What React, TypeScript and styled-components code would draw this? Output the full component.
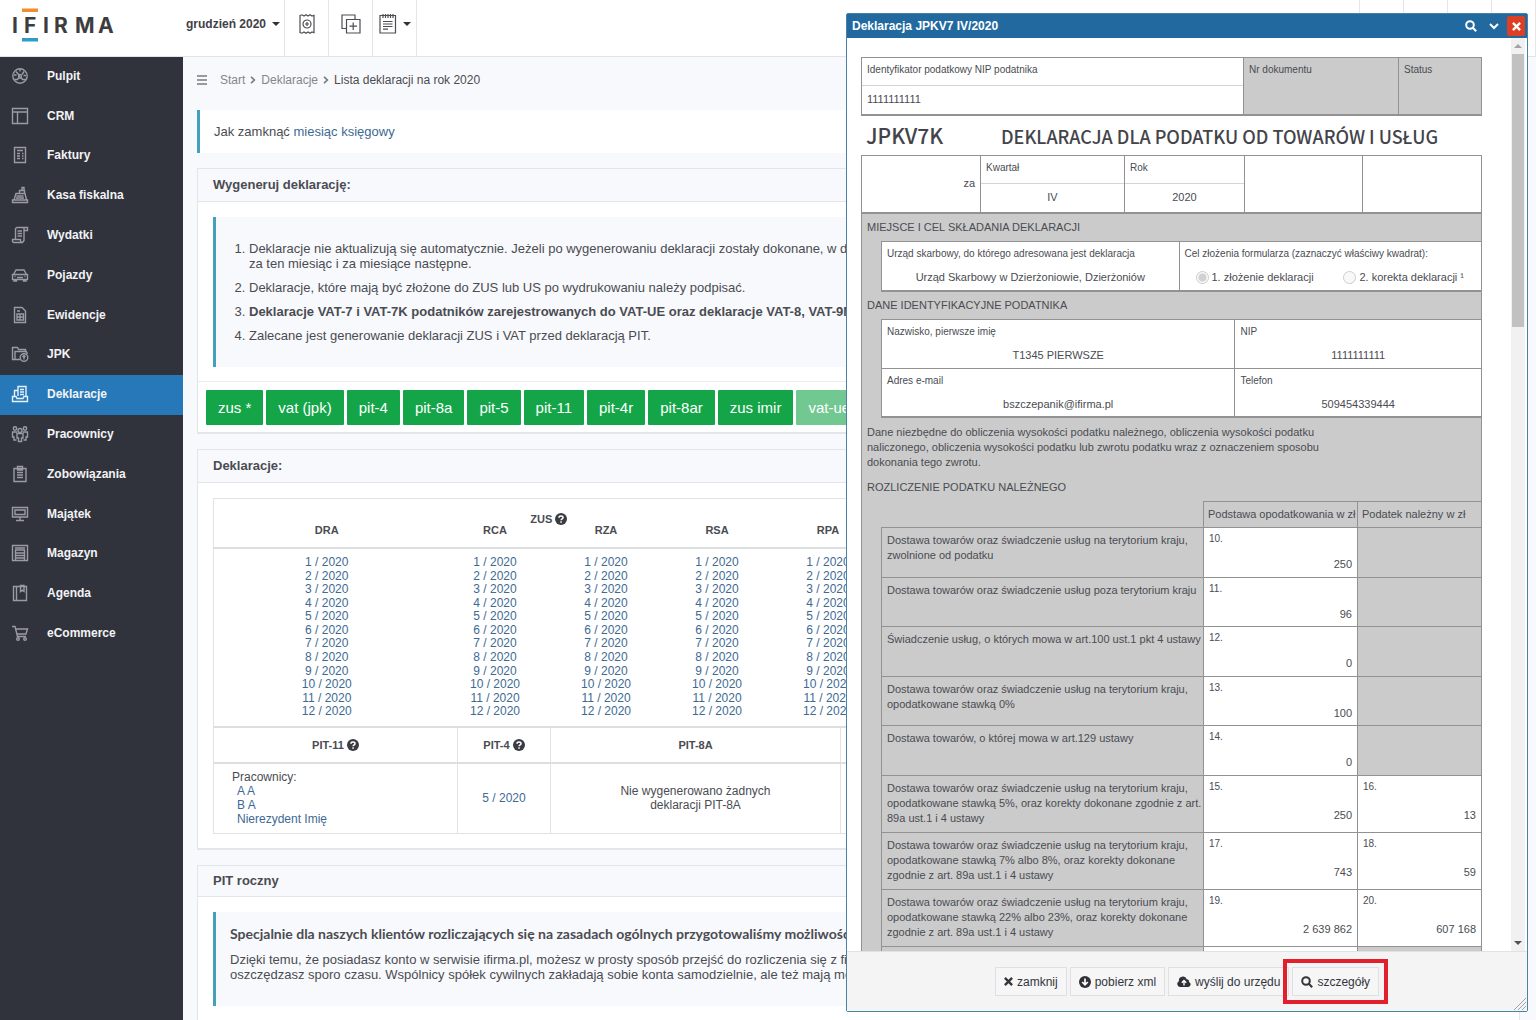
import React from 'react';
import styled, { createGlobalStyle, css } from 'styled-components';

const sans = `"Liberation Sans", Arial, sans-serif`;
const display = `"Noto Sans CJK JP", "Noto Sans", sans-serif`;

const GlobalStyle = createGlobalStyle`
  *, *::before, *::after { box-sizing: border-box; }
  body { margin: 0; background: #f8f9fc; font-family: ${sans}; font-size: 12px; color: #4a4c52; overflow: hidden; }
  button { font-family: inherit; cursor: pointer; }
  a { color: #3d6a93; text-decoration: none; }
  h1, h2, h3, p { margin: 0; }
`;

const Page = styled.div`
  display: flex;
  flex-direction: column;
  height: 100vh;
  overflow: hidden;
`;

/* ---------- top bar ---------- */

const TopBar = styled.header`
  display: flex;
  flex: none;
  height: 57px;
  background: #fff;
  border-bottom: 1px solid #e1e3e6;
`;

const LogoLink = styled.a`
  width: 182px;
  padding: 6px 0 0 11px;
`;

const BarButton = styled.button<{ $wide?: boolean }>`
  display: flex;
  align-items: center;
  justify-content: center;
  gap: 6px;
  width: ${(p) => (p.$wide ? 103 : 44)}px;
  padding: 0 0 8px;
  border: 0;
  border-right: 1px solid #e6e6e8;
  background: none;
  color: #3f4147;
  font-size: 12px;
  font-weight: 700;
`;

const Caret = styled.span`
  border: 4px solid transparent;
  border-top-color: #2f3238;
  border-bottom: 0;
`;

const BarSlots = styled.div`
  display: grid;
  grid-template-columns: repeat(4, 44px);
  margin-left: auto;
  border-right: 1px solid #e6e6e8;
`;

const BarSlot = styled.div`
  border-left: 1px solid #e6e6e8;
`;

/* ---------- sidebar ---------- */

const Columns = styled.div`
  display: flex;
  flex: 1;
  min-height: 0;
`;

const Sidebar = styled.nav`
  flex: none;
  width: 183px;
  background: #30323c;
`;

const NavList = styled.ul`
  display: grid;
  grid-auto-rows: 1fr;
  height: 597px;
  margin: 0;
  padding: 0;
  list-style: none;
`;

const NavLink = styled.a<{ $active?: boolean }>`
  display: flex;
  align-items: center;
  gap: 18px;
  height: 100%;
  padding: 0 0 2px 11px;
  font-weight: 700;
  color: #f2f3f5;
  background: ${(p) => (p.$active ? '#2678b8' : 'transparent')};
  svg { color: ${(p) => (p.$active ? '#e6f1fa' : '#9a9ca4')}; }
`;

/* ---------- main column ---------- */

const Main = styled.main`
  flex: 1;
  min-width: 0;
  padding: 13px 16px 0 14px;
`;

const Crumbs = styled.nav`
  display: flex;
  align-items: center;
  height: 20px;
  font-size: 12px;
  gap: 5px;
  a { color: #84868c; }
  svg { flex: none; }
`;

const MenuButton = styled.button`
  display: flex;
  margin-right: 8px;
  padding: 0;
  border: 0;
  background: none;
`;

const Callout = styled.section<{ $tinted?: boolean }>`
  border-left: 3px solid #45a0b9;
  background: ${(p) => (p.$tinted ? '#f8f9fc' : '#fff')};
`;

const Tip = styled(Callout)`
  margin-top: 20px;
  padding: 14px;
  font-size: 13px;
  line-height: 15px;
`;

const Card = styled.section`
  margin-top: 15px;
  border: 1px solid #e2e5e9;
  border-bottom-width: 2px;
  background: #fff;
`;

const CardTitle = styled.h2<{ $compact?: boolean }>`
  height: ${(p) => (p.$compact ? 31 : 33)}px;
  padding: 0 15px;
  border-bottom: 1px solid #e2e5e9;
  background: #f8f9fc;
  font-size: 13px;
  line-height: ${(p) => (p.$compact ? 30 : 32)}px;
  color: #4a4c52;
`;

const CardBody = styled.div`
  padding: 15px 15px 14px;
`;

const Rules = styled.ol`
  margin: 0;
  padding: 24px 0 15px 33px;
  font-size: 13px;
  line-height: 15px;
  white-space: nowrap;
  li { margin-bottom: 9px; }
`;

const CardActions = styled.div`
  display: flex;
  gap: 3px;
  padding: 8px 8px 7px;
  border-top: 1px solid #ececee;
`;

const GreenButton = styled.button`
  height: 35px;
  padding: 0 12px;
  border: 0;
  border-radius: 1px;
  background: #15a549;
  color: #fff;
  font-size: 15px;
  white-space: nowrap;
  &:disabled { opacity: 0.6; }
`;

const DataTable = styled.table`
  width: 100%;
  table-layout: fixed;
  border-collapse: collapse;
  border: 1px solid #e0e3e3;
  font-size: 12px;
  line-height: 14px;
`;

const ZusTable = styled(DataTable)`
  border-bottom: 2px solid #dcdfdf;
  th { padding: 0; font-size: 11px; font-weight: 700; line-height: 11px; }
  tr:first-child th { padding-top: 14px; vertical-align: bottom; }
  tr:nth-child(2) th { padding-bottom: 11px; }
  thead { border-bottom: 2px solid #dcdfdf; }
  tbody td { height: 179px; padding: 7px 0; text-align: center; vertical-align: top; }
`;

const PeriodLink = styled.a`
  display: block;
  font-size: 12px;
  line-height: 13px;
`;

const Periods = styled.div`
  display: grid;
  height: 163px;
  grid-auto-rows: 1fr;
`;

const PitTable = styled(DataTable)`
  border-top: 0;
  th { height: 35px; padding: 0; font-size: 11px; border-right: 1px solid #e0e3e3; border-bottom: 2px solid #dcdfdf; }
  td { height: 70px; padding: 0 60px; text-align: center; border-right: 1px solid #e0e3e3; }
  td:first-child { padding: 0 18px; text-align: left; }
  td:nth-child(2) { padding: 0; }
  td:first-child a { padding-left: 5px; line-height: 14px; }
`;

const HelpMark = styled.svg`
  width: 12px;
  height: 12px;
  margin-left: 3px;
  vertical-align: -2px;
`;

const Promo = styled(Callout)`
  height: 94px;
  padding: 12px 14px;
  overflow: hidden;
  white-space: nowrap;
  font-size: 13px;
  line-height: 15px;
  h3 { margin-bottom: 8px; font: 700 14px/20px Lato, sans-serif; }
`;

/* ---------- declaration window ---------- */

const Window = styled.div`
  position: fixed;
  top: 13px;
  right: 8px;
  bottom: 8px;
  width: 682px;
  display: flex;
  flex-direction: column;
  border: 1px solid #4a82a6;
  border-radius: 2px;
  background: #fff;
`;

const WindowBar = styled.header`
  display: flex;
  flex: none;
  align-items: center;
  gap: 3px;
  height: 24px;
  padding: 0 2px 0 5px;
  background: #22699f;
  color: #fff;
  h1 { flex: 1; font-size: 12px; }
`;

const WindowButton = styled.button<{ $close?: boolean }>`
  display: flex;
  align-items: center;
  justify-content: center;
  width: ${(p) => (p.$close ? 18 : 20)}px;
  height: 20px;
  padding: 0;
  border: 0;
  border-radius: 2px;
  background: ${(p) => (p.$close ? '#dd3f24' : 'none')};
  color: #fff;
`;

const WindowBody = styled.div`
  display: flex;
  flex: 1;
  min-height: 0;
  overflow: hidden;
`;

const Sheet = styled.form`
  flex: 1;
  min-width: 0;
  padding: 19px 29px 0 14px;
  font-size: 11px;
  line-height: 15px;
`;

const ScrollTrack = styled.div`
  display: flex;
  flex: none;
  flex-direction: column;
  align-items: center;
  width: 14px;
  margin-right: 2px;
  padding: 6px 0;
  background: #f1f1f1;
`;

const ScrollArrow = styled.span<{ $down?: boolean }>`
  border: 4px solid transparent;
  ${(p) =>
    p.$down
      ? css`margin-top: auto; border-top-color: #50545a; border-bottom: 0;`
      : css`margin-bottom: 6px; border-bottom-color: #a3a3a3; border-top: 0;`}
`;

const ScrollThumb = styled.span`
  width: 12px;
  height: 273px;
  background: #c1c1c1;
`;

const line = '1px solid #929292';

const FieldRow = styled.div<{ $cols: string; $h?: number; $top?: boolean; $heavy?: boolean }>`
  display: grid;
  grid-template-columns: ${(p) => p.$cols};
  height: ${(p) => p.$h ?? 50}px;
  border-bottom: ${line};
  border-left: ${line};
  ${(p) => p.$top && css`border-top: ${line};`}
  ${(p) => p.$heavy && css`border-bottom-width: 2px;`}
`;

const Field = styled.div<{ $grey?: boolean }>`
  display: flex;
  flex-direction: column;
  border-right: ${line};
  background: ${(p) => (p.$grey ? '#cbcbcb' : '#fff')};
`;

const FieldLabel = styled.span<{ $ruled?: boolean }>`
  padding: 4px 5px 0;
  font-size: 10px;
  line-height: 15px;
  ${(p) => p.$ruled && css`height: 28px; border-bottom: 1px solid #d4d4d4; flex: none;`}
`;

const FieldValue = styled.span<{ $align?: string; $low?: boolean }>`
  margin: auto 0;
  padding: ${(p) => (p.$low ? '4px 5px 0' : '0 5px 2px')};
  text-align: ${(p) => p.$align ?? 'center'};
`;

const SheetTitle = styled.h2`
  display: grid;
  grid-template-columns: 135px 1fr;
  align-items: baseline;
  height: 39px;
  padding: 0 5px;
  font: 500 18px/38px ${display};
  color: #43444a;
  white-space: nowrap;
`;

const FormCode = styled.span`
  font-size: 21px;
`;

const Part = styled.section`
  padding-left: 19px;
  background: #cbcbcb;
  border-left: ${line};
  border-right: ${line};
  ${Field}:last-child { border-right: 0; }
`;

const PartTitle = styled.h3`
  margin-left: -19px;
  padding-left: 5px;
  font-size: 11px;
  font-weight: 400;
  line-height: 27px;
`;

const PartNote = styled.p`
  margin-left: -19px;
  padding: 7px 0 4px 5px;
  white-space: pre-line;
`;

const Choices = styled.div`
  display: flex;
  justify-content: space-between;
  margin: auto 0;
  padding: 4px 17px 0 16px;
`;

const Choice = styled.label`
  display: flex;
  align-items: center;
  gap: 3px;
  input { width: 13px; height: 13px; margin: 0; }
`;

const TaxTable = styled.table`
  width: 100%;
  table-layout: fixed;
  border-collapse: collapse;
  th, td { padding: 5px 5px 3px; text-align: left; vertical-align: top; font-weight: 400; }
  thead th, tbody th, td { border: ${line}; }
  tbody th, thead th { padding-right: 0; white-space: pre-line; }
  thead th { height: 26px; padding-left: 4px; white-space: nowrap; }
  tbody tr { height: 49px; }
  tbody tr:nth-child(odd) { height: 50px; }
  thead tr > :last-child, tbody tr > :last-child { border-right: 0; }
`;

const TaxRow = styled.tr<{ $tall: boolean }>`
  &&& { ${(p) => p.$tall && css`height: 57px;`} }
`;

const BlankHead = styled.td`
  && { border: 0; }
`;

const AmountCell = styled.td`
  background: #fff;
`;

const BoxNumber = styled.span`
  display: block;
  font-size: 10px;
  line-height: 12px;
`;

const Amount = styled.span<{ $tall: boolean }>`
  display: block;
  margin-top: ${(p) => (p.$tall ? 15 : 12)}px;
  text-align: right;
`;

const WindowFooter = styled.footer`
  position: relative;
  display: flex;
  flex: none;
  align-items: center;
  gap: 3px;
  height: 60px;
  padding: 0 0 0 148px;
  border-top: 1px solid #e2e2e2;
  background: #f4f4f4;
`;

const FootButton = styled.button`
  position: relative;
  display: flex;
  align-items: center;
  gap: 4px;
  height: 29px;
  padding: 0 8px;
  border: 1px solid #dfe0e3;
  background: #f6f6f7;
  color: #33353b;
  font-size: 12px;
  white-space: nowrap;
`;

const Highlight = styled.span`
  position: absolute;
  inset: -9px -10px;
  border: 4px solid #e0202c;
  pointer-events: none;
`;

const ResizeGrip = styled.svg`
  position: absolute;
  right: 1px;
  bottom: 1px;
`;

/* ---------- drawings ---------- */

const Logo = () => (
  <svg width="106" height="40" viewBox="0 0 106 40" role="img" aria-label="IFIRMA">
    <rect x="11" y="2.500" width="16" height="3.500" fill="#ee8e31" />
    <rect x="11" y="32" width="16" height="3.500" fill="#2f9cc4" />
    <text x="1 13 32 43 64 87" y="27" fontFamily="Inter, sans-serif" fontWeight="700" fontSize="21" fill="#3d3d40">IFIRMA</text>
  </svg>
);

const icons: Record<string, React.ReactNode> = {
  gauge: <><circle cx="9" cy="9" r="7.2" /><path d="M9 9.500 6 5.500M3 8h2.500M5 4.500l1.200 1.500M9 2v2.500M13 4.500l-2 3M15 8.500h-2.500M3.500 12.500h3l1-1.500h3l1 1.500h3" /><circle cx="9" cy="9" r="1.500" /></>,
  layout: <><path d="M1.500 1.500h15v15h-15zM1.500 5h15M6.500 5v11.500" /></>,
  invoice: <><path d="M3.500 1.500h11v15h-11z" /><path d="M6 4.500h6M6 7.500h3M11 7.500h1.500M6 10h3M11 10h1.500M6 12.500h3M11 12.500h1.500" /></>,
  cash: <><path d="M1.500 16.500h15v-2.500h-15zM3 14l2-6.500h9L15.500 14M5.500 10h7M5 12h8M8.500 7.500v-3h5v3M11 4.500V1.500h2v3" /></>,
  scroll: <><path d="M4.500 13V2.500L6 1.500h10.500v3H13M13 2v12.500l-1.500 2H3a1.500 1.500 0 0 1-1.500-1.500v-1.500h8V15a1.500 1.500 0 0 0 1.500 1.500M6.500 5h4.500M6.500 7.500h4.500M6.500 10h4.500" /></>,
  car: <><path d="M1.500 8.500h15v5h-15zM2.500 8.500 5 4h8l2.500 4.500M3 13.500V15h2.500v-1.500M12.500 13.500V15H15v-1.500M6 11.500h6M3.500 10.500h1M13.500 10.500h1" /></>,
  ledger: <><path d="M3.500 1.500h7.500l3.500 3.500v11.500h-11z" /><path d="M6 5h3M6 8h6.500v6H6zM9 8v6M6 11h6.500" /></>,
  folder: <><path d="M9 14.500H1.500v-12h5l1 2h7v3M4 14.500v-8h12M16 7v2" /><circle cx="13" cy="12.500" r="3.800" /><path d="M13 14.500v-4M11.500 12 13 10.500l1.500 1.500" /></>,
  tray: <><path d="M1.500 11.500h3.500l1 2h6l1-2h3.500v5h-15zM3.500 11V5.500h3M7 11V1.500h8v10M9 4.500h4M9 7h4M9 9.500h4" /></>,
  people: <><circle cx="9" cy="5.500" r="2" /><circle cx="4" cy="3.500" r="1.700" /><circle cx="14" cy="3.500" r="1.700" /><path d="M6 8.500h6v4.500h-1.500v3.500h-3V13H6zM6 7H1.500v5H3v3h2.500M12 7h4.500v5H15v3h-2.500" /></>,
  clipboard: <><path d="M3 3.500h12v13H3zM6.500 1.500h5v3.500h-5zM6 7.500h6M6 10h6M6 12.500h6" /></>,
  monitor: <><path d="M1.500 2.500h15v9.500h-15zM4 5h10v4.500H4zM9 12v3M5 15.500h8" /></>,
  storage: <><path d="M1.500 1.500h15v15h-15zM4.500 16.500V6h9v10.500M4.500 9h9M4.500 11.500h9M4.500 14h9M4 4h10" /></>,
  agenda: <><path d="M2.500 2.500h13v14h-13zM5.500 2.500v14M9.500 1.500h3.500v6l-1.800-1.300L9.500 7.500z" /></>,
  cart: <><path d="M1 2.500h3l2.500 10h8.500M4.700 5h11.800l-1.500 5H6" /><circle cx="7" cy="15" r="1.300" /><circle cx="14" cy="15" r="1.300" /></>,
};

const NavIcon = ({ name }: { name: string }) => (
  <svg width="18" height="18" viewBox="0 0 18 18" fill="none" stroke="currentColor" strokeWidth="1.4" aria-hidden="true">
    {icons[name]}
  </svg>
);

const Help = () => (
  <HelpMark viewBox="0 0 12 12" role="img" aria-label="Pomoc">
    <circle cx="6" cy="6" r="6" fill="#3a3c42" />
    <path d="M4 4.700C4 2.500 8 2.500 8 4.700 8 5.900 6.100 6 6.100 7.300" fill="none" stroke="#fff" strokeWidth="1.500" />
    <rect x="5.300" y="8.300" width="1.500" height="1.500" fill="#fff" />
  </HelpMark>
);

const Magnifier = ({ size = 12 }: { size?: number }) => (
  <svg width={size} height={size} viewBox="0 0 12 12" fill="none" stroke="currentColor" strokeWidth="2" aria-hidden="true">
    <circle cx="5" cy="5" r="3.800" />
    <path d="m7.800 7.800 3.400 3.400" />
  </svg>
);

const Cross = ({ size = 10 }: { size?: number }) => (
  <svg width={size} height={size} viewBox="0 0 10 10" stroke="currentColor" strokeWidth="2.600" aria-hidden="true">
    <path d="m1 1 8 8M9 1 1 9" />
  </svg>
);

const Chevron = () => (
  <svg width="6" height="8" viewBox="0 0 6 8" fill="none" stroke="#77797f" strokeWidth="1.600" aria-hidden="true">
    <path d="m1 .8 3.400 3.200L1 7.200" />
  </svg>
);

/* ---------- data ---------- */

const nav: [string, string][] = [
  ['Pulpit', 'gauge'], ['CRM', 'layout'], ['Faktury', 'invoice'], ['Kasa fiskalna', 'cash'],
  ['Wydatki', 'scroll'], ['Pojazdy', 'car'], ['Ewidencje', 'ledger'], ['JPK', 'folder'],
  ['Deklaracje', 'tray'], ['Pracownicy', 'people'], ['Zobowiązania', 'clipboard'], ['Majątek', 'monitor'],
  ['Magazyn', 'storage'], ['Agenda', 'agenda'], ['eCommerce', 'cart'],
];

const generators = ['zus *', 'vat (jpk)', 'pit-4', 'pit-8a', 'pit-5', 'pit-11', 'pit-4r', 'pit-8ar', 'zus imir'];
const zusForms = ['DRA', 'RCA', 'RZA', 'RSA', 'RPA'];
const months = Array.from({ length: 12 }, (_, i) => `${i + 1} / 2020`);

type Tax = { text: string; base: [string, string]; due?: [string, string] };
const supply = 'Dostawa towarów oraz świadczenie usług na terytorium kraju,';
const note = `Dane niezbędne do obliczenia wysokości podatku należnego, obliczenia wysokości podatku
naliczonego, obliczenia wysokości podatku lub zwrotu podatku wraz z oznaczeniem sposobu
dokonania tego zwrotu.`;
const taxes: Tax[] = [
  { text: `${supply}\nzwolnione od podatku`, base: ['10.', '250'] },
  { text: 'Dostawa towarów oraz świadczenie usług poza terytorium kraju', base: ['11.', '96'] },
  { text: 'Świadczenie usług, o których mowa w art.100 ust.1 pkt 4 ustawy', base: ['12.', '0'] },
  { text: `${supply}\nopodatkowane stawką 0%`, base: ['13.', '100'] },
  { text: 'Dostawa towarów, o której mowa w art.129 ustawy', base: ['14.', '0'] },
  { text: `${supply}\nopodatkowane stawką 5%, oraz korekty dokonane zgodnie z art.\n89a ust.1 i 4 ustawy`, base: ['15.', '250'], due: ['16.', '13'] },
  { text: `${supply}\nopodatkowane stawką 7% albo 8%, oraz korekty dokonane\nzgodnie z art. 89a ust.1 i 4 ustawy`, base: ['17.', '743'], due: ['18.', '59'] },
  { text: `${supply}\nopodatkowane stawką 22% albo 23%, oraz korekty dokonane\nzgodnie z art. 89a ust.1 i 4 ustawy`, base: ['19.', '2 639 862'], due: ['20.', '607 168'] },
];

/* ---------- sections ---------- */

const Header = () => (
  <TopBar>
    <LogoLink href="#"><Logo /></LogoLink>
    <BarButton $wide>grudzień 2020 <Caret /></BarButton>
    <BarButton aria-label="Nowy paragon">
      <svg width="16" height="20" viewBox="0 0 16 20" fill="none" stroke="#4c4e54" strokeWidth="1.200">
        <path d="M1 1.500 3 .8l2 1.200 2-1.200L9 2l2-1.200L13 2l2-.7v17.400l-2-.7-2 1.200L9 18l-2 1.200L5 18l-2 1.200-2-.7z" />
        <circle cx="8" cy="10" r="4" /><path d="M8 8v4M6 10h4" />
      </svg>
    </BarButton>
    <BarButton aria-label="Powiel">
      <svg width="20" height="20" viewBox="0 0 20 20" fill="none" stroke="#4c4e54" strokeWidth="1.200">
        <path d="M5.500 14.500H1V1h13v4.500M5.500 5.500H19V19H5.500zM12.200 8.500v7.500M8.500 12.200H16" />
      </svg>
    </BarButton>
    <BarButton aria-label="Notatki">
      <svg width="18" height="20" viewBox="0 0 18 20" fill="none" stroke="#4c4e54" strokeWidth="1.200">
        <path d="M1 1.500h15.500V19H1zM4 0v4M6.500 0v4M9 0v4M11.500 0v4M14 0v4M4 7.500h9.500M4 10h9.500M4 12.500h9.500M4 15.200h5" />
      </svg>
      <Caret />
    </BarButton>
    <BarSlots><BarSlot /><BarSlot /><BarSlot /><BarSlot /></BarSlots>
  </TopBar>
);

const Side = () => (
  <Sidebar>
    <NavList>
      {nav.map(([label, icon]) => (
        <li key={label}>
          <NavLink href="#" $active={label === 'Deklaracje'}><NavIcon name={icon} />{label}</NavLink>
        </li>
      ))}
    </NavList>
  </Sidebar>
);

const Content = () => (
  <Main>
    <Crumbs>
      <MenuButton aria-label="Menu">
        <svg width="10" height="10" viewBox="0 0 10 10" stroke="#77797f" strokeWidth="1.500"><path d="M0 1h10M0 5h10M0 9h10" /></svg>
      </MenuButton>
      <a href="#">Start</a><Chevron /><a href="#">Deklaracje</a><Chevron /><span>Lista deklaracji na rok 2020</span>
    </Crumbs>
    <Tip>Jak zamknąć <a href="#">miesiąc księgowy</a></Tip>

    <Card>
      <CardTitle>Wygeneruj deklarację:</CardTitle>
      <CardBody>
        <Callout $tinted>
          <Rules>
            <li>Deklaracje nie aktualizują się automatycznie. Jeżeli po wygenerowaniu deklaracji zostały dokonane, w danym<br />za ten miesiąc i za miesiące następne.</li>
            <li>Deklaracje, które mają być złożone do ZUS lub US po wydrukowaniu należy podpisać.</li>
            <li><b>Deklaracje VAT-7 i VAT-7K podatników zarejestrowanych do VAT-UE oraz deklaracje VAT-8, VAT-9M i</b></li>
            <li>Zalecane jest generowanie deklaracji ZUS i VAT przed deklaracją PIT.</li>
          </Rules>
        </Callout>
      </CardBody>
      <CardActions>
        {generators.map((g) => <GreenButton key={g}>{g}</GreenButton>)}
        <GreenButton disabled>vat-ue</GreenButton>
      </CardActions>
    </Card>

    <Card>
      <CardTitle>Deklaracje:</CardTitle>
      <CardBody>
        <ZusTable>
          <colgroup>
            <col width="226" />
            {zusForms.slice(1).map((f) => <col key={f} width="111" />)}
            <col />
          </colgroup>
          <thead>
            <tr><th colSpan={5}>ZUS<Help /></th><td rowSpan={2} /></tr>
            <tr>{zusForms.map((f) => <th key={f} scope="col">{f}</th>)}</tr>
          </thead>
          <tbody>
            <tr>
              {zusForms.map((f) => (
                <td key={f}><Periods>{months.map((m) => <PeriodLink key={m} href="#">{m}</PeriodLink>)}</Periods></td>
              ))}
              <td />
            </tr>
          </tbody>
        </ZusTable>
        <PitTable>
          <colgroup><col width="244" /><col width="93" /><col width="290" /><col /></colgroup>
          <thead>
            <tr><th>PIT-11<Help /></th><th>PIT-4<Help /></th><th>PIT-8A</th><th /></tr>
          </thead>
          <tbody>
            <tr>
              <td>Pracownicy:<PeriodLink href="#">A A</PeriodLink><PeriodLink href="#">B A</PeriodLink><PeriodLink href="#">Nierezydent Imię</PeriodLink></td>
              <td><a href="#">5 / 2020</a></td>
              <td>Nie wygenerowano żadnych deklaracji PIT-8A</td>
              <td />
            </tr>
          </tbody>
        </PitTable>
      </CardBody>
    </Card>

    <Card>
      <CardTitle $compact>PIT roczny</CardTitle>
      <CardBody>
        <Promo $tinted>
          <h3>Specjalnie dla naszych klientów rozliczających się na zasadach ogólnych przygotowaliśmy możliwość</h3>
          <p>Dzięki temu, że posiadasz konto w serwisie ifirma.pl, możesz w prosty sposób przejść do rozliczenia się z fiskusem<br />oszczędzasz sporo czasu. Wspólnicy spółek cywilnych zakładają sobie konta samodzielnie, ale też mają możliwość</p>
        </Promo>
      </CardBody>
    </Card>
  </Main>
);

const Declaration = () => (
  <Window role="dialog" aria-labelledby="declaration-title">
    <WindowBar>
      <h1 id="declaration-title">Deklaracja JPKV7 IV/2020</h1>
      <WindowButton aria-label="Szukaj"><Magnifier /></WindowButton>
      <WindowButton aria-label="Zwiń">
        <svg width="10" height="7" viewBox="0 0 10 7" fill="none" stroke="currentColor" strokeWidth="2"><path d="m1 1 4 4 4-4" /></svg>
      </WindowButton>
      <WindowButton $close aria-label="Zamknij okno"><Cross size={9} /></WindowButton>
    </WindowBar>
    <WindowBody>
      <Sheet>
        <FieldRow $top $heavy $cols="382fr 155fr 83fr" $h={59}>
          <Field><FieldLabel $ruled>Identyfikator podatkowy NIP podatnika</FieldLabel><FieldValue $align="left">1111111111</FieldValue></Field>
          <Field $grey><FieldLabel>Nr dokumentu</FieldLabel></Field>
          <Field $grey><FieldLabel>Status</FieldLabel></Field>
        </FieldRow>
        <SheetTitle><FormCode>JPKV7K</FormCode><span>DEKLARACJA DLA PODATKU OD TOWARÓW I USŁUG</span></SheetTitle>
        <FieldRow $top $heavy $cols="119fr 144fr 120fr 118fr 119fr" $h={59}>
          <Field><FieldValue $align="right">za</FieldValue></Field>
          <Field><FieldLabel $ruled>Kwartał</FieldLabel><FieldValue>IV</FieldValue></Field>
          <Field><FieldLabel $ruled>Rok</FieldLabel><FieldValue>2020</FieldValue></Field>
          <Field />
          <Field />
        </FieldRow>

        <Part>
          <PartTitle>MIEJSCE I CEL SKŁADANIA DEKLARACJI</PartTitle>
          <FieldRow $top $heavy $cols="298fr 302fr" $h={51}>
            <Field><FieldLabel>Urząd skarbowy, do którego adresowana jest deklaracja</FieldLabel><FieldValue $low>Urząd Skarbowy w Dzierżoniowie, Dzierżoniów</FieldValue></Field>
            <Field>
              <FieldLabel>Cel złożenia formularza (zaznaczyć właściwy kwadrat):</FieldLabel>
              <Choices>
                <Choice><input type="radio" name="purpose" defaultChecked disabled />1. złożenie deklaracji</Choice>
                <Choice><input type="radio" name="purpose" disabled />2. korekta deklaracji ¹</Choice>
              </Choices>
            </Field>
          </FieldRow>
          <PartTitle>DANE IDENTYFIKACYJNE PODATNIKA</PartTitle>
          <FieldRow $top $cols="354fr 246fr">
            <Field><FieldLabel>Nazwisko, pierwsze imię</FieldLabel><FieldValue $low>T1345 PIERWSZE</FieldValue></Field>
            <Field><FieldLabel>NIP</FieldLabel><FieldValue $low>1111111111</FieldValue></Field>
          </FieldRow>
          <FieldRow $heavy $cols="354fr 246fr" $h={49}>
            <Field><FieldLabel>Adres e-mail</FieldLabel><FieldValue $low>bszczepanik@ifirma.pl</FieldValue></Field>
            <Field><FieldLabel>Telefon</FieldLabel><FieldValue $low>509454339444</FieldValue></Field>
          </FieldRow>
          <PartNote>{note}</PartNote>
          <PartTitle>ROZLICZENIE PODATKU NALEŻNEGO</PartTitle>
          <TaxTable>
            <colgroup><col width="322" /><col width="154" /><col /></colgroup>
            <thead>
              <tr><BlankHead /><th scope="col">Podstawa opodatkowania w zł</th><th scope="col">Podatek należny w zł</th></tr>
            </thead>
            <tbody>
              {taxes.map(({ text, base, due }) => (
                <TaxRow key={base[0]} $tall={!!due}>
                  <th scope="row">{text}</th>
                  <AmountCell><BoxNumber>{base[0]}</BoxNumber><Amount $tall={!!due}>{base[1]}</Amount></AmountCell>
                  {due ? <AmountCell><BoxNumber>{due[0]}</BoxNumber><Amount $tall>{due[1]}</Amount></AmountCell> : <td />}
                </TaxRow>
              ))}
              <tr><th /><AmountCell /><td /></tr>
            </tbody>
          </TaxTable>
        </Part>
      </Sheet>
      <ScrollTrack><ScrollArrow /><ScrollThumb /><ScrollArrow $down /></ScrollTrack>
    </WindowBody>
    <WindowFooter>
      <FootButton><Cross size={9} />zamknij</FootButton>
      <FootButton>
        <svg width="12" height="12" viewBox="0 0 12 12"><circle cx="6" cy="6" r="6" fill="#2f3137" /><path d="M6 2.500v6M3.200 6 6 8.800 8.800 6" fill="none" stroke="#fff" strokeWidth="1.700" /></svg>
        pobierz xml
      </FootButton>
      <FootButton>
        <svg width="14" height="11" viewBox="0 0 14 11"><path d="M3 11a3 3 0 0 1-1-5.700A4 4 0 0 1 9.700 3.200 2.300 2.300 0 0 1 12 6a2.600 2.600 0 0 1-.8 5z" fill="#2f3137" /><path d="M7 9.500V5M4.800 6.800 7 4.600l2.200 2.200" fill="none" stroke="#fff" strokeWidth="1.400" /></svg>
        wyślij do urzędu
      </FootButton>
      <FootButton><Magnifier />szczegóły<Highlight /></FootButton>
      <ResizeGrip width="13" height="13" viewBox="0 0 13 13" stroke="#a2a6aa" aria-hidden="true"><path d="M1 13 13 1M5 13l8-8M9 13l4-4" /></ResizeGrip>
    </WindowFooter>
  </Window>
);

export default function App() {
  return (
    <>
      <GlobalStyle />
      <Page>
        <Header />
        <Columns>
          <Side />
          <Content />
        </Columns>
      </Page>
      <Declaration />
    </>
  );
}
